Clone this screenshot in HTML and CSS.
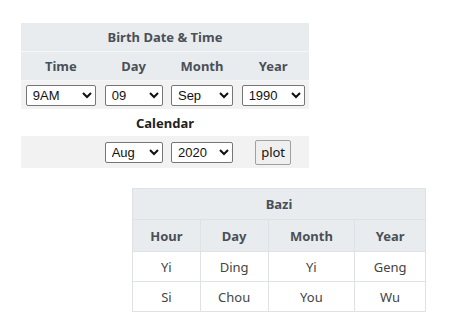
FILE: index.html
```html
<!DOCTYPE html>
<html lang="en">
<head>
  <meta charset="UTF-8" />
  <title>Bazi</title>
  <link rel="stylesheet" href="styles.css">
</head>
<body>
  <!-- Birth input -->
  <table class="input-table">
    <tr class="head">
      <th colspan="4">Birth Date &amp; Time</th>
    </tr>
    <tr class="head">
      <th>Time</th>
      <th>Day</th>
      <th>Month</th>
      <th>Year</th>
    </tr>
    <tr class="shade">
      <td><select class="w-time"><option>9AM</option></select></td>
      <td><select class="w-day"><option>09</option></select></td>
      <td><select class="w-month"><option>Sep</option></select></td>
      <td><select class="w-year"><option>1990</option></select></td>
    </tr>
    <tr>
      <th colspan="4" class="cal">Calendar</th>
    </tr>
    <tr class="shade last">
      <td></td>
      <td><select class="w-day"><option>Aug</option></select></td>
      <td><select class="w-month"><option>2020</option></select></td>
      <td><button>plot</button></td>
    </tr>
  </table>

  <!-- Result -->
  <table class="bazi">
    <tr class="head">
      <th colspan="4" class="title">Bazi</th>
    </tr>
    <tr class="head">
      <th class="c1">Hour</th>
      <th class="c2">Day</th>
      <th class="c3">Month</th>
      <th class="c4">Year</th>
    </tr>
    <tr>
      <td>Yi</td><td>Ding</td><td>Yi</td><td>Geng</td>
    </tr>
    <tr>
      <td>Si</td><td>Chou</td><td>You</td><td>Wu</td>
    </tr>
  </table>
</body>
</html>
```

FILE: styles.css
```css
body {
  font-family: 'Noto Sans', sans-serif;
  font-size: 13px;
  margin: 0;
  padding: 23px 0 0 21px;
  background-color: #fff;
  color: #333;
}

table {
  border-collapse: collapse;
}

.input-table {
  width: 288px;
}

.input-table th,
.input-table td {
  text-align: center;
  padding: 0;
}

.input-table .head th {
  background-color: #e9ecef;
  color: #495057;
  height: 28px;
  border-bottom: 1px solid #f5f6f7;
}

.input-table .shade td {
  background-color: #f2f2f2;
  height: 28px;
}

.input-table .last td {
  height: 32px;
}

.input-table .cal {
  height: 27px;
  color: #222;
}

select {
  font-family: 'Liberation Sans', sans-serif;
  font-size: 13px;
  height: 21px;
  border: 1px solid #767676;
  border-radius: 2px;
  background: #fff;
  color: #111;
  padding: 0 0 0 2px;
}

.w-time { width: 70px; }
.w-day { width: 58px; }
.w-month { width: 62px; }
.w-year { width: 63px; }

button {
  font-family: 'Noto Sans', sans-serif;
  font-size: 13px;
  height: 25px;
  padding: 0 5px;
  border: 1px solid #a0a0a0;
  border-radius: 2px;
  background: #efefef;
  color: #111;
}

.bazi {
  margin: 20px 0 0 111px;
  width: 294px;
}

.bazi th,
.bazi td {
  border: 1px solid #dee2e6;
  text-align: center;
  height: 29px;
  padding: 0;
}

.bazi .head th {
  background-color: #e9ecef;
  color: #495057;
  height: 31px;
}

.bazi .head .title {
  height: 30px;
}

.bazi td {
  color: #444;
}

.bazi .c1 { width: 67px; }
.bazi .c2 { width: 67px; }
.bazi .c3 { width: 86px; }
.bazi .c4 { width: 70px; }
```
